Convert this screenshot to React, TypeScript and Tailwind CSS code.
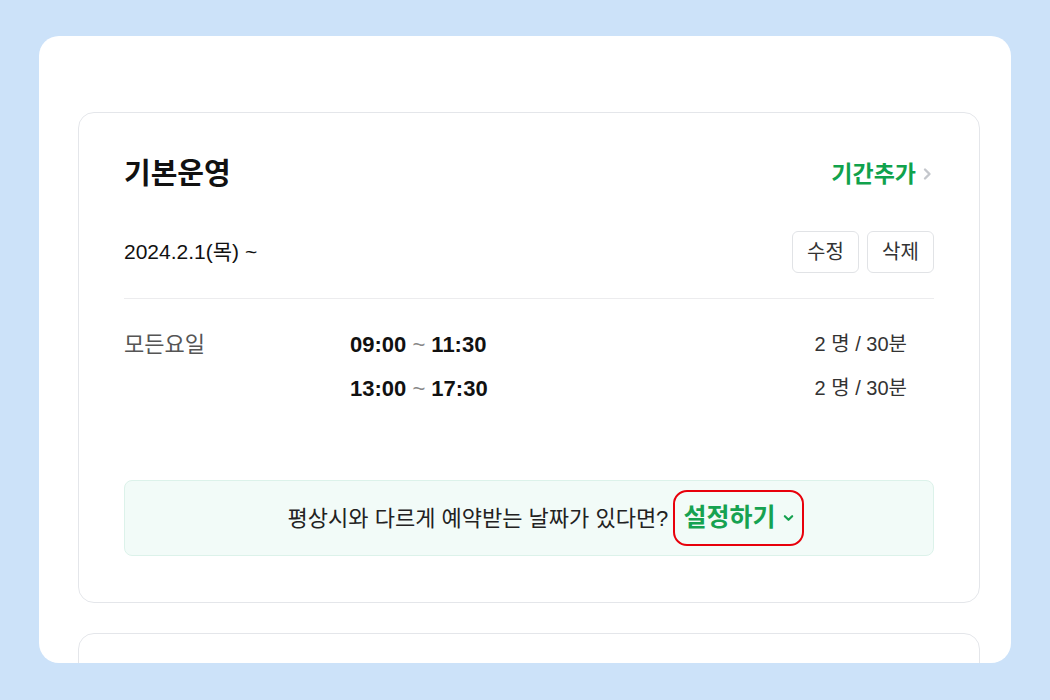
import React from "react";

const font = { fontFamily: '"Liberation Sans", "Noto Sans CJK KR", sans-serif' };

function Chevron({ className }: { className?: string }) {
  return (
    <svg viewBox="0 0 10 16" className={className} fill="none" stroke="currentColor" strokeWidth="2.4" strokeLinecap="round" strokeLinejoin="round">
      <path d="M3 3.5l4.5 4.5-4.5 4.5" />
    </svg>
  );
}

function ChevronDown({ className }: { className?: string }) {
  return (
    <svg viewBox="0 0 12 8" className={className} fill="none" stroke="currentColor" strokeWidth="2.4" strokeLinecap="round" strokeLinejoin="round">
      <path d="M2 2l4 4 4-4" />
    </svg>
  );
}

export default function App() {
  return (
    <div className="w-[1050px] h-[700px] bg-[#cce2f9] pt-[36px] pl-[39px]" style={font}>
      <div className="w-[972px] h-[627px] bg-white rounded-[20px] overflow-hidden pl-[39px] pr-[31px] pt-[76px]">
        <div className="border border-[#e4e6ea] rounded-[16px] px-[45px] pt-[43px] pb-[46px]">
          <div className="flex justify-between items-center h-[36px]">
            <div className="text-[29px] font-bold text-[#111] leading-none">기본운영</div>
            <div className="flex items-center text-[23px] font-bold text-[#10a24c] leading-none pr-[2px]">
              기간추가
              <Chevron className="w-[10px] h-[16px] ml-[6px] text-[#c4c7cc]" />
            </div>
          </div>
          <div className="mt-[39px] flex justify-between items-center">
            <div className="text-[21px] text-[#111]">2024.2.1(목) ~</div>
            <div className="flex gap-[8px]">
              <button className="w-[67px] h-[42px] border border-[#e1e3e6] rounded-[6px] text-[20px] text-[#333] bg-white">수정</button>
              <button className="w-[67px] h-[42px] border border-[#e1e3e6] rounded-[6px] text-[20px] text-[#333] bg-white">삭제</button>
            </div>
          </div>
          <div className="mt-[25px] border-t border-[#ececee]" />
          <div className="pt-[23px] flex">
            <div className="w-[226px] h-[44px] flex items-center text-[22px] text-[#555]">모든요일</div>
            <div className="flex-1">
              <div className="h-[44px] flex items-center justify-between">
                <div className="text-[22px] font-bold text-[#111]">
                  09:00 <span className="font-normal text-[#888]">~</span> 11:30
                </div>
                <div className="text-[20px] text-[#333] pr-[27px]">2 명 / 30분</div>
              </div>
              <div className="h-[44px] flex items-center justify-between">
                <div className="text-[22px] font-bold text-[#111]">
                  13:00 <span className="font-normal text-[#888]">~</span> 17:30
                </div>
                <div className="text-[20px] text-[#333] pr-[27px]">2 명 / 30분</div>
              </div>
            </div>
          </div>
          <div className="mt-[70px] h-[76px] border border-[#dcf2ea] bg-[#f2fbf8] rounded-[8px] flex items-center justify-center pl-[34px]">
            <span className="text-[22px] text-[#222]">평상시와 다르게 예약받는 날짜가 있다면?</span>
            <div className="ml-[5px] h-[56px] border-2 border-[#e8000b] rounded-[14px] pl-[8px] pr-[8px] flex items-center text-[25px] font-bold text-[#17a251]">
              설정하기
              <ChevronDown className="w-[11px] h-[8px] ml-[8px]" />
            </div>
          </div>
        </div>
        <div className="mt-[30px] h-[100px] border border-[#e4e6ea] rounded-[16px]" />
      </div>
    </div>
  );
}
